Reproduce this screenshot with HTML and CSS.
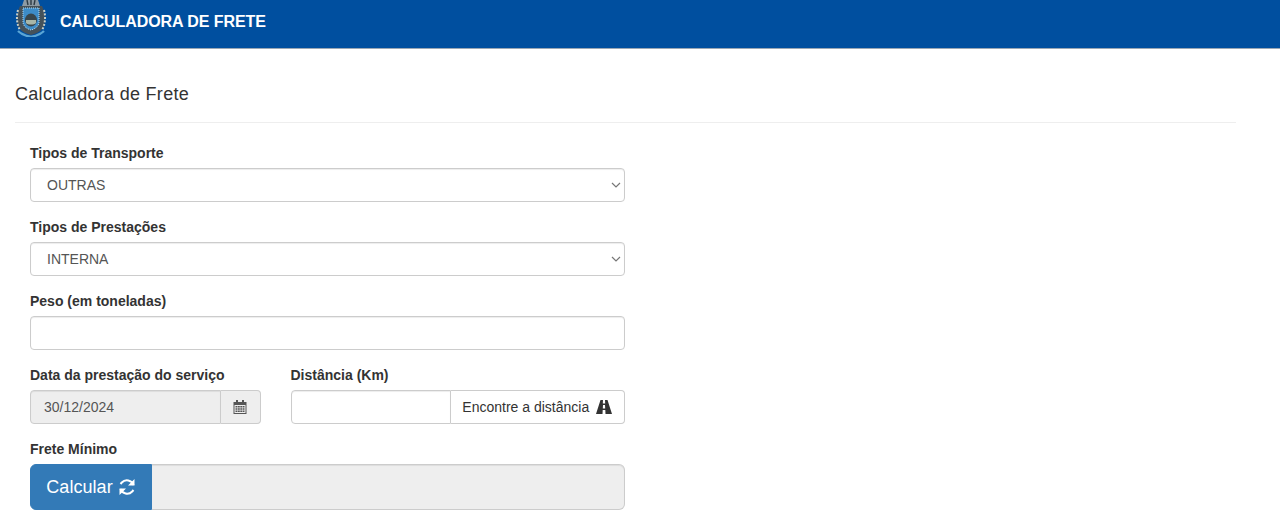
FILE: index.html
```html
<!DOCTYPE html>
<html>
	<head>
		<meta charset="utf-8">
		<title>Calculadora de Frete</title>
		<link rel="stylesheet" href="styles.css">
	</head>
	<body>
		<div class="topo">
			<svg class="brasao" viewBox="0 0 32 37" width="32" height="37">
				<path d="M9 0h14l2 6H7z" fill="#8d9aa3"/>
				<path d="M12 0l1 5M16 0v5M20 0l-1 5" stroke="#2c3a44" stroke-width="1.4" fill="none"/>
				<path d="M5 6c-3 6-4 16-1 22 3 4 8 6 12 7 4-1 9-3 12-7 3-6 2-16-1-22z" fill="#45525a"/>
				<path d="M3 10c-2 7-1 15 2 20M29 10c2 7 1 15-2 20" stroke="#c9cfc7" stroke-width="2" stroke-dasharray="2 1.5" fill="none"/>
				<path d="M8 8h16v14c0 4-4 7-8 8-4-1-8-4-8-8z" fill="#3d8cc8" stroke="#b9dcef" stroke-width="1" stroke-dasharray="1 1"/>
				<ellipse cx="16" cy="20" rx="6" ry="6.500" fill="#39464c"/>
				<path d="M11 20h10v3c-2 2-8 2-10 0z" fill="#a9b7a8"/>
				<path d="M3 31c4 4 9 5 13 6 4-1 9-2 13-6" stroke="#5aa6d6" stroke-width="2.400" fill="none"/>
			</svg>
			<span class="topo-titulo">CALCULADORA DE FRETE</span>
		</div>

		<div class="conteudo">
			<h1>Calculadora de Frete</h1>
			<hr>
			<form class="formulario">
				<div class="grupo">
					<label>Tipos de Transporte</label>
					<div class="caixa-select">
						<select class="campo"><option>OUTRAS</option></select>
						<svg class="seta" viewBox="0 0 10 6" width="10" height="6"><path d="M1 1l4 4 4-4" fill="none" stroke="#777" stroke-width="1.200"/></svg>
					</div>
				</div>
				<div class="grupo">
					<label>Tipos de Prestações</label>
					<div class="caixa-select">
						<select class="campo"><option>INTERNA</option></select>
						<svg class="seta" viewBox="0 0 10 6" width="10" height="6"><path d="M1 1l4 4 4-4" fill="none" stroke="#777" stroke-width="1.200"/></svg>
					</div>
				</div>
				<div class="grupo">
					<label>Peso (em toneladas)</label>
					<input class="campo" type="text">
				</div>
				<div class="linha">
					<div class="grupo col-data">
						<label>Data da prestação do serviço</label>
						<div class="junto">
							<input class="campo data" type="text" value="30/12/2024" disabled>
							<span class="anexo anexo-cal">
								<svg viewBox="0 0 14 14" width="14" height="14">
									<path fill="#555" d="M3 0h2v2h4V0h2v2h2.500v12H.5V2H3zM1.500 5v8h11V5z"/>
									<path fill="#555" d="M2.500 6h2v1.500h-2zM5 6h1.800v1.500H5zM7.300 6h1.800v1.500H7.300zM9.600 6h1.900v1.500H9.600zM2.500 8.200h2v1.500h-2zM5 8.200h1.800v1.500H5zM7.300 8.200h1.800v1.500H7.300zM9.600 8.200h1.900v1.500H9.600zM2.500 10.400h2v1.600h-2zM5 10.400h1.800v1.600H5zM7.300 10.400h1.800v1.600H7.300zM9.600 10.400h1.900v1.600H9.600z"/>
								</svg>
							</span>
						</div>
					</div>
					<div class="grupo col-dist">
						<label>Distância (Km)</label>
						<div class="junto">
							<input class="campo dist" type="text">
							<button class="anexo anexo-dist" type="button">Encontre a distância
								<svg viewBox="0 0 16 14" width="16" height="14">
									<path fill="#333" d="M4.500 0H7L6.800 3.500h2.400L9 0h2.500L16 14H9.500l-.2-4H6.700l-.2 4H0zM7 5l-.2 3.500h2.400L9 5z"/>
								</svg>
							</button>
						</div>
					</div>
				</div>
				<div class="grupo">
					<label>Frete Mínimo</label>
					<div class="junto">
						<button class="calcular" type="button">Calcular
							<svg viewBox="0 0 18 18" width="18" height="18">
								<path fill="none" stroke="#fff" stroke-width="2" d="M15.500 7A7 7 0 0 0 3.800 4.500L2.500 6M2.500 11a7 7 0 0 0 11.700 2.500l1.300-1.500"/>
								<path fill="#fff" d="M16.500 1v6.500H10zM1.500 17v-6.500H8z"/>
							</svg>
						</button>
						<input class="campo resultado" type="text" disabled>
					</div>
				</div>
			</form>
		</div>
	</body>
</html>
```

FILE: styles.css
```css
* {
	box-sizing: border-box;
}
body {
	margin: 0;
	height: 510px;
	overflow: hidden;
	background-color: #ffffff;
	font-family: "Liberation Sans", Arial, sans-serif;
	font-size: 14px;
	color: #333333;
}
.topo {
	display: flex;
	align-items: flex-start;
	height: 49px;
	background-color: #004f9f;
	border-bottom: 1px solid #9aa7b5;
	padding-left: 15px;
}
.brasao {
	display: block;
}
.topo-titulo {
	margin: 13px 0 0 13px;
	font-size: 16px;
	line-height: 18px;
	font-weight: bold;
	letter-spacing: -0.08px;
	color: #ffffff;
}
.conteudo {
	padding: 35px 44px 0 15px;
}
h1 {
	margin: 0;
	font-size: 18px;
	line-height: 20px;
	font-weight: normal;
	letter-spacing: 0.3px;
}
hr {
	margin: 18px 0 20px;
	border: 0;
	border-top: 1px solid #eeeeee;
}
.formulario {
	width: 595px;
	margin-left: 15px;
}
.grupo {
	margin-bottom: 15px;
}
label {
	display: block;
	margin-bottom: 5px;
	line-height: 20px;
	font-weight: bold;
}
.campo {
	display: block;
	width: 100%;
	height: 34px;
	padding: 6px 12px;
	font-family: inherit;
	font-size: 14px;
	color: #555555;
	background-color: #ffffff;
	border: 1px solid #cccccc;
	border-radius: 4px;
	box-shadow: inset 0 1px 1px rgba(0,0,0,.075);
}
.caixa-select {
	position: relative;
}
select.campo {
	appearance: none;
	padding-left: 16px;
}
.seta {
	position: absolute;
	right: 4px;
	top: 14px;
}
.linha {
	display: flex;
	gap: 30px;
}
.col-data {
	width: 230.500px;
}
.col-dist {
	flex: 1;
}
.junto {
	display: flex;
}
.data {
	flex: 1;
	min-width: 0;
	padding-left: 13px;
	background-color: #eeeeee;
	border-radius: 4px 0 0 4px;
}
.anexo {
	display: flex;
	align-items: center;
	justify-content: center;
	height: 34px;
	background-color: #eeeeee;
	border: 1px solid #cccccc;
	border-left: 0;
	border-radius: 0 4px 4px 0;
	font-family: inherit;
	font-size: 14px;
	color: #333333;
}
.anexo-cal {
	width: 40px;
	flex: none;
}
.dist {
	width: 160px;
	flex: none;
	border-radius: 4px 0 0 4px;
}
.anexo-dist {
	flex: 1;
	gap: 7px;
	padding: 0;
	background-color: #ffffff;
}
.calcular {
	display: flex;
	align-items: center;
	justify-content: center;
	gap: 5px;
	flex: none;
	width: 122px;
	height: 46px;
	padding: 0;
	font-family: inherit;
	font-size: 18px;
	letter-spacing: 0.05px;
	color: #ffffff;
	background-color: #337ab7;
	border: 1px solid #337ab7;
	border-radius: 6px 0 0 6px;
}
.resultado {
	flex: 1;
	height: 46px;
	background-color: #eeeeee;
	border-left: 0;
	border-radius: 0 6px 6px 0;
}
```
